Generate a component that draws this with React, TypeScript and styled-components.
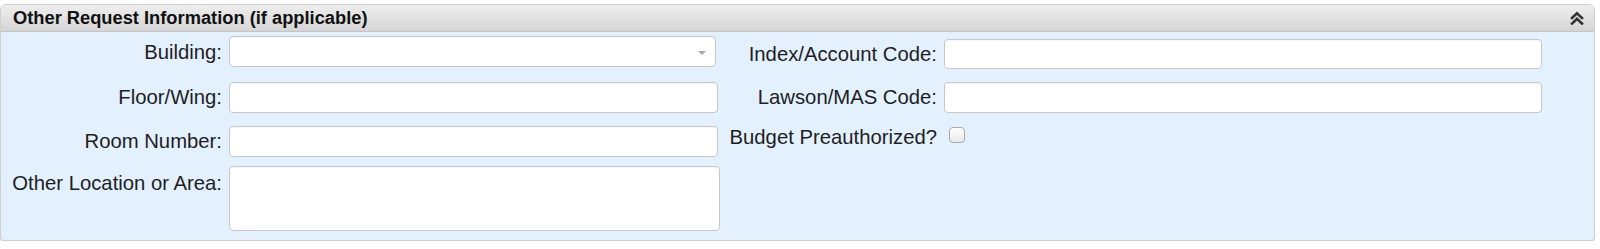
import React from 'react'
import styled, { createGlobalStyle } from 'styled-components'

const GlobalStyle = createGlobalStyle`
  html, body {
    margin: 0;
    padding: 0;
    background: #ffffff;
  }

  body {
    font-family: "Liberation Sans", Arial, Helvetica, sans-serif;
  }
`

const Page = styled.div`
  padding: 4px 5px 0 0;
`

const Panel = styled.section`
  border: 1px solid #cfcfcf;
  border-radius: 6px 6px 4px 4px;
  background-color: #e3f0fd;
  box-shadow: 0 1px 0 #dcdcdc;
  overflow: hidden;
`

const PanelHeader = styled.header`
  display: flex;
  align-items: center;
  justify-content: space-between;

  height: 26px;
  padding: 0 10px 0 12px;

  background: linear-gradient(to bottom, #eeeeee 0%, #d5d5d5 100%);
  border-bottom: 1px solid #c6c6c6;
`

const PanelTitle = styled.h2`
  margin: 0;

  font-size: 18.3px;
  font-weight: 700;
  color: #111111;
  line-height: 26px;
`

const CollapseButton = styled.button`
  display: flex;
  align-items: center;
  justify-content: center;

  padding: 0;
  border: none;
  background: none;
  line-height: 0;

  cursor: pointer;
`

const FormGrid = styled.div`
  display: grid;
  grid-template-columns: 221px 489px 212px 598px;
  grid-template-rows: 46px 44px 40px 65px;
  column-gap: 7px;

  padding: 4px 0 9px 0;
`

const Label = styled.label<{ $top?: number; $lineHeight?: number }>`
  align-self: start;

  margin-top: ${p => p.$top ?? 0}px;

  font-size: 20.3px;
  line-height: ${p => p.$lineHeight ?? 31}px;
  color: #1e1e1e;
  text-align: right;
  white-space: nowrap;
`

const fieldBase = `
  box-sizing: border-box;
  align-self: start;

  background-color: #ffffff;
  border: 1px solid #c8c8c8;
  border-radius: 4px;
  box-shadow: inset 0 1px 1px rgba(0, 0, 0, 0.04);

  font-family: "Liberation Sans", Arial, sans-serif;
  font-size: 16px;
  outline: none;
`

const TextInput = styled.input<{ $height?: number; $top?: number }>`
  ${fieldBase}
  width: 100%;
  height: ${p => p.$height ?? 31}px;
  margin: ${p => p.$top ?? 0}px 0 0 0;
  padding: 0 8px;
`

const TextArea = styled.textarea`
  ${fieldBase}
  width: 491px;
  height: 65px;
  margin: 0;
  padding: 6px 8px;
  resize: none;
`

const SelectBox = styled.div`
  ${fieldBase}
  display: flex;
  align-items: center;
  justify-content: flex-end;

  width: 487px;
  height: 31px;
  padding-right: 9px;

  cursor: pointer;
`

const SelectArrow = styled.span`
  width: 0;
  height: 0;
  margin-top: 2px;

  border-left: 4px solid transparent;
  border-right: 4px solid transparent;
  border-top: 4px solid #a8a8a8;
`

const CheckBox = styled.input.attrs({ type: 'checkbox' })`
  appearance: none;
  align-self: start;

  width: 16px;
  height: 16px;
  margin: 1px 0 0 5px;

  background: linear-gradient(to bottom, #ffffff 0%, #e9e9e9 100%);
  border: 1px solid #a9a9a9;
  border-radius: 4px;
`

const Spacer = styled.div``

const IconDoubleUp: React.FC = () => (
  <svg width="14" height="14" viewBox="0 0 14 14" fill="none">
    <path
      d="M2 7 L7 2.2 L12 7"
      stroke="#333333"
      strokeWidth="2.6"
      strokeLinecap="square"
      strokeLinejoin="miter"
    />
    <path
      d="M2 12.6 L7 7.8 L12 12.6"
      stroke="#333333"
      strokeWidth="2.6"
      strokeLinecap="square"
      strokeLinejoin="miter"
    />
  </svg>
)

const App: React.FC = () => {
  return (
    <>
      <GlobalStyle />
      <Page>
        <Panel>
          <PanelHeader>
            <PanelTitle>Other Request Information (if applicable)</PanelTitle>
            <CollapseButton aria-label="Collapse">
              <IconDoubleUp />
            </CollapseButton>
          </PanelHeader>
          <FormGrid>
            <Label $top={1}>Building:</Label>
            <SelectBox>
              <SelectArrow />
            </SelectBox>
            <Label $top={3} $lineHeight={30}>
              Index/Account Code:
            </Label>
            <TextInput $top={3} $height={30} />

            <Label>Floor/Wing:</Label>
            <TextInput />
            <Label>Lawson/MAS Code:</Label>
            <TextInput />

            <Label>Room Number:</Label>
            <TextInput />
            <Label $lineHeight={22}>Budget Preauthorized?</Label>
            <CheckBox />

            <Label $top={2}>Other Location or Area:</Label>
            <TextArea />
            <Spacer />
            <Spacer />
          </FormGrid>
        </Panel>
      </Page>
    </>
  )
}

export default App
